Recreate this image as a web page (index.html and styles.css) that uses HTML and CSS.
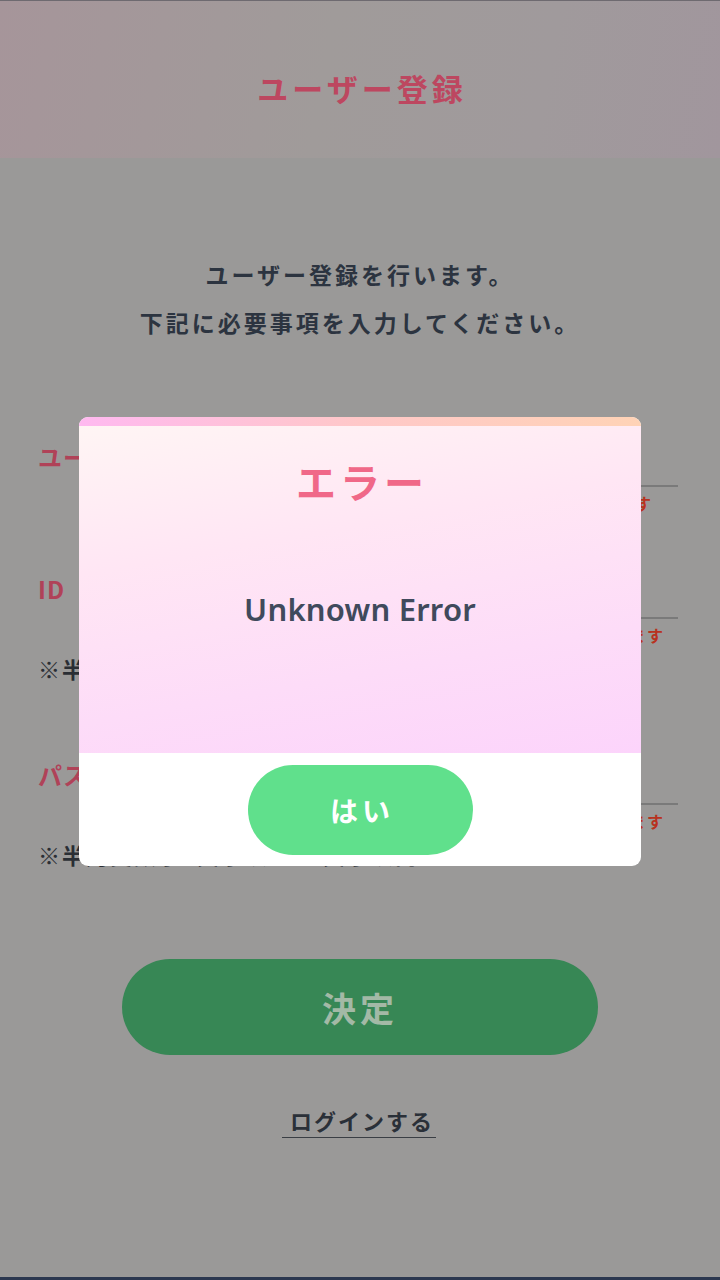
FILE: index.html
```html
<!DOCTYPE html>
<html lang="ja">
<head>
<meta charset="utf-8">
<title>ユーザー登録</title>
<link rel="stylesheet" href="styles.css">
</head>
<body>
<div class="page">
  <header class="header">
    <h1 class="header-title">ユーザー登録</h1>
  </header>
  <div class="intro">
    <p>ユーザー登録を行います。</p>
    <p>下記に必要事項を入力してください。</p>
  </div>
  <form class="form">
    <div class="field field-name">
      <div class="field-row">
        <label class="field-label">ユーザー名</label>
        <div class="field-input"></div>
      </div>
      <p class="field-error field-error-short">必須項目です</p>
    </div>
    <div class="field field-id">
      <div class="field-row">
        <label class="field-label">ID</label>
        <div class="field-input"></div>
      </div>
      <p class="field-error">入力内容に誤りがあります</p>
      <p class="field-hint">※半角英数字4文字以上16文字以内</p>
    </div>
    <div class="field field-pass">
      <div class="field-row">
        <label class="field-label">パスワード</label>
        <div class="field-input"></div>
      </div>
      <p class="field-error">入力内容に誤りがあります</p>
      <p class="field-hint">※半角英数字8文字以上16文字以内</p>
    </div>
    <div class="submit-wrap">
      <button type="button" class="submit">決定</button>
    </div>
    <div class="login-wrap">
      <a class="login-link">ログインする</a>
    </div>
  </form>
  <div class="bottom-bar"></div>

  <div class="modal">
    <div class="modal-strip"></div>
    <div class="modal-body">
      <h2 class="modal-title">エラー</h2>
      <p class="modal-message">Unknown Error</p>
    </div>
    <div class="modal-footer">
      <button type="button" class="modal-btn">はい</button>
    </div>
  </div>
</div>
</body>
</html>
```

FILE: styles.css
```css
* { box-sizing: border-box; margin: 0; padding: 0; }

html, body {
  width: 720px;
  height: 1280px;
}

body {
  font-family: "Noto Sans CJK JP", "Noto Sans", sans-serif;
  background: #9a9998;
  overflow: hidden;
}

.page {
  position: relative;
  width: 720px;
  height: 1280px;
  display: flex;
  flex-direction: column;
  border-top: 1px solid #6e6a70;
}

.header {
  height: 157px;
  display: flex;
  align-items: center;
  justify-content: center;
  background: linear-gradient(100deg, #a6959a 0%, #a09b9a 45%, #a09a9c 75%, #a1969d 100%);
}

.header-title {
  font-size: 31px;
  font-weight: 700;
  letter-spacing: 4px;
  color: #bd4760;
  line-height: 40px;
  padding-top: 16px;
  padding-left: 4px;
}

.intro {
  margin-top: 92px;
  text-align: center;
  font-size: 23px;
  font-weight: 700;
  letter-spacing: 3px;
  line-height: 48px;
  color: #2c3440;
}

.form {
  display: flex;
  flex-direction: column;
  padding: 0 42px 0 38px;
  margin-top: 93px;
}

.field-row {
  display: flex;
  align-items: flex-start;
  height: 48px;
}

.field-label {
  font-size: 24px;
  font-weight: 700;
  line-height: 36px;
  letter-spacing: 1px;
  color: #b04258;
  width: 170px;
}

.field-input {
  flex: 1;
  height: 48px;
  border-bottom: 2px solid #7a7a7a;
}

.field-error {
  margin-top: 4px;
  text-align: right;
  font-size: 16px;
  font-weight: 700;
  line-height: 24px;
  letter-spacing: 2px;
  color: #b83220;
  padding-right: 13px;
}

.field-error-short {
  padding-right: 25px;
}

.field-hint {
  margin-top: 6px;
  font-size: 22px;
  font-weight: 700;
  line-height: 30px;
  letter-spacing: 2px;
  color: #2a2e34;
}

.field-name { margin-bottom: 56px; }
.field-id { margin-bottom: 74px; }

.submit-wrap {
  display: flex;
  justify-content: center;
  margin-top: 90px;
  padding-left: 4px;
}

.submit {
  width: 476px;
  height: 96px;
  border: none;
  border-radius: 48px;
  background: #378755;
  color: #a3b9a6;
  font-family: "Noto Sans CJK JP", "Noto Sans", sans-serif;
  font-size: 34px;
  font-weight: 700;
  letter-spacing: 4px;
}

.login-wrap {
  display: flex;
  justify-content: center;
  margin-top: 50px;
  padding-left: 2px;
}

.login-link {
  font-size: 22px;
  font-weight: 700;
  letter-spacing: 2px;
  line-height: 30px;
  color: #2a3038;
  padding: 0 2px 2px 8px;
  border-bottom: 1px solid #3a3e44;
}

.bottom-bar {
  position: absolute;
  left: 0;
  right: 0;
  bottom: 0;
  height: 3px;
  background: #2c3850;
}

/* modal overlay */
.modal {
  position: absolute;
  left: 79px;
  top: 416px;
  width: 562px;
  height: 449px;
  display: flex;
  flex-direction: column;
  border-radius: 9px;
  overflow: hidden;
  background: #ffffff;
}

.modal-strip {
  height: 9px;
  background: linear-gradient(90deg, #ffb9f0 0%, #ffc8c8 50%, #ffd3b6 100%);
}

.modal-body {
  height: 327px;
  display: flex;
  flex-direction: column;
  align-items: center;
  background: linear-gradient(170deg, #fff5f4 0%, #ffe6f4 35%, #fddcf8 70%, #fcd4fb 100%);
}

.modal-title {
  margin-top: 27px;
  font-size: 40px;
  font-weight: 700;
  line-height: 56px;
  letter-spacing: 4px;
  color: #f06888;
  padding-left: 4px;
}

.modal-message {
  margin-top: 80px;
  font-family: "Noto Sans", sans-serif;
  font-size: 31px;
  font-weight: 600;
  line-height: 40px;
  letter-spacing: 0.2px;
  color: #404a5c;
}

.modal-footer {
  flex: 1;
  display: flex;
  justify-content: center;
  padding-top: 12px;
}

.modal-btn {
  width: 225px;
  height: 90px;
  border: none;
  border-radius: 45px;
  background: #60e08c;
  color: #ffffff;
  font-family: "Noto Sans CJK JP", "Noto Sans", sans-serif;
  font-size: 28px;
  font-weight: 700;
  letter-spacing: 4px;
  padding-left: 4px;
}
```
